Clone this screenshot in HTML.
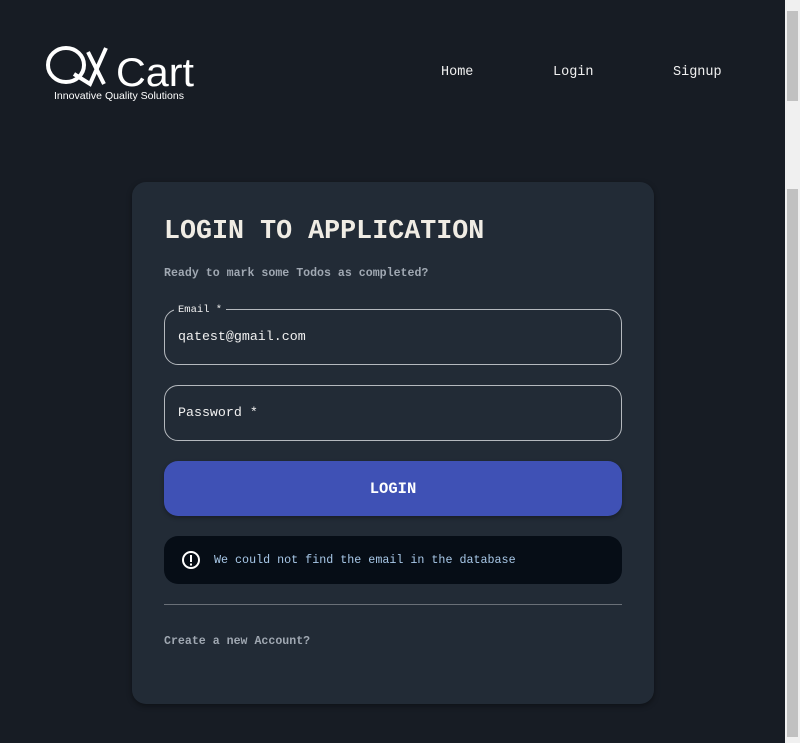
<!DOCTYPE html>
<html><head><style>
*{margin:0;padding:0;box-sizing:border-box}
body{width:800px;height:743px;background:#171c24;font-family:"Liberation Mono",monospace;position:relative;overflow:hidden;color:#e8e6e3}
.sb{position:absolute;left:785px;top:0;width:15px;height:743px;background:#f0f0f0}
.th{position:absolute;left:2px;width:11px;background:#c1c1c1}
.nav a{position:absolute;top:65px;color:#f0f0f0;font-size:13.5px}
.card{position:absolute;left:132px;top:182px;width:522px;height:522px;background:#222b36;border-radius:14px;box-shadow:0 2px 6px rgba(0,0,0,.4)}
h1{position:absolute;left:32px;top:35px;font-size:26.7px;font-weight:bold;color:#f0ece4}
.sub{position:absolute;left:32px;top:85px;font-size:11.6px;font-weight:bold;color:#a0a8b2}
.in{position:absolute;left:32px;width:458px;height:56px;border:1px solid #b5b9be;border-radius:14px;font-size:13.3px;padding:0 13px;line-height:54px;color:#f0f0f0}
.lbl{position:absolute;left:9px;top:-7px;background:#222b36;padding:0 4px;font-size:10.5px;line-height:14px}
.btn{position:absolute;left:32px;top:279px;width:458px;height:55px;background:#3f51b5;border-radius:14px;text-align:center;line-height:57px;font-weight:bold;font-size:15.5px;color:#fff;box-shadow:0 2px 4px rgba(0,0,0,.3)}
.al{position:absolute;left:32px;top:354px;width:458px;height:48px;background:#060d16;border-radius:14px;color:#a8c8e8;font-size:11.7px;line-height:48px;padding-left:50px}
.hr{position:absolute;left:32px;top:422px;width:458px;height:1px;background:#6a7078}
.cr{position:absolute;left:32px;top:453px;font-size:11.6px;font-weight:bold;color:#a0a8b2}
</style></head><body>
<svg style="position:absolute;left:44px;top:40px" width="160" height="64">
<ellipse cx="22" cy="25" rx="18" ry="17" fill="none" stroke="#fff" stroke-width="4"/>
<path d="M30 34 L46 44 L62 8" fill="none" stroke="#fff" stroke-width="4"/>
<path d="M44 12 L60 44" fill="none" stroke="#fff" stroke-width="4"/>
<text x="72" y="46" fill="#fff" font-family="Liberation Sans" font-size="40" textLength="78" lengthAdjust="spacingAndGlyphs">Cart</text>
<text x="10" y="59" fill="#fff" font-family="Liberation Sans" font-size="10.5" textLength="130" lengthAdjust="spacingAndGlyphs">Innovative Quality Solutions</text>
</svg>
<div class="nav"><a style="left:441px">Home</a><a style="left:553px">Login</a><a style="left:673px">Signup</a></div>
<div class="card">
<h1>LOGIN TO APPLICATION</h1>
<div class="sub">Ready to mark some Todos as completed?</div>
<div class="in" style="top:127px"><span class="lbl">Email *</span>qatest@gmail.com</div>
<div class="in" style="top:203px">Password *</div>
<div class="btn">LOGIN</div>
<div class="al"><svg style="position:absolute;left:17px;top:14px" width="20" height="20"><circle cx="10" cy="10" r="8" fill="none" stroke="#fff" stroke-width="2"/><rect x="9" y="5" width="2" height="7" fill="#fff"/><rect x="9" y="13.5" width="2" height="2" fill="#fff"/></svg>We could not find the email in the database</div>
<div class="hr"></div>
<div class="cr">Create a new Account?</div>
</div>
<div class="sb"><div class="th" style="top:11px;height:90px"></div><div class="th" style="top:189px;height:548px"></div></div>
</body></html>
